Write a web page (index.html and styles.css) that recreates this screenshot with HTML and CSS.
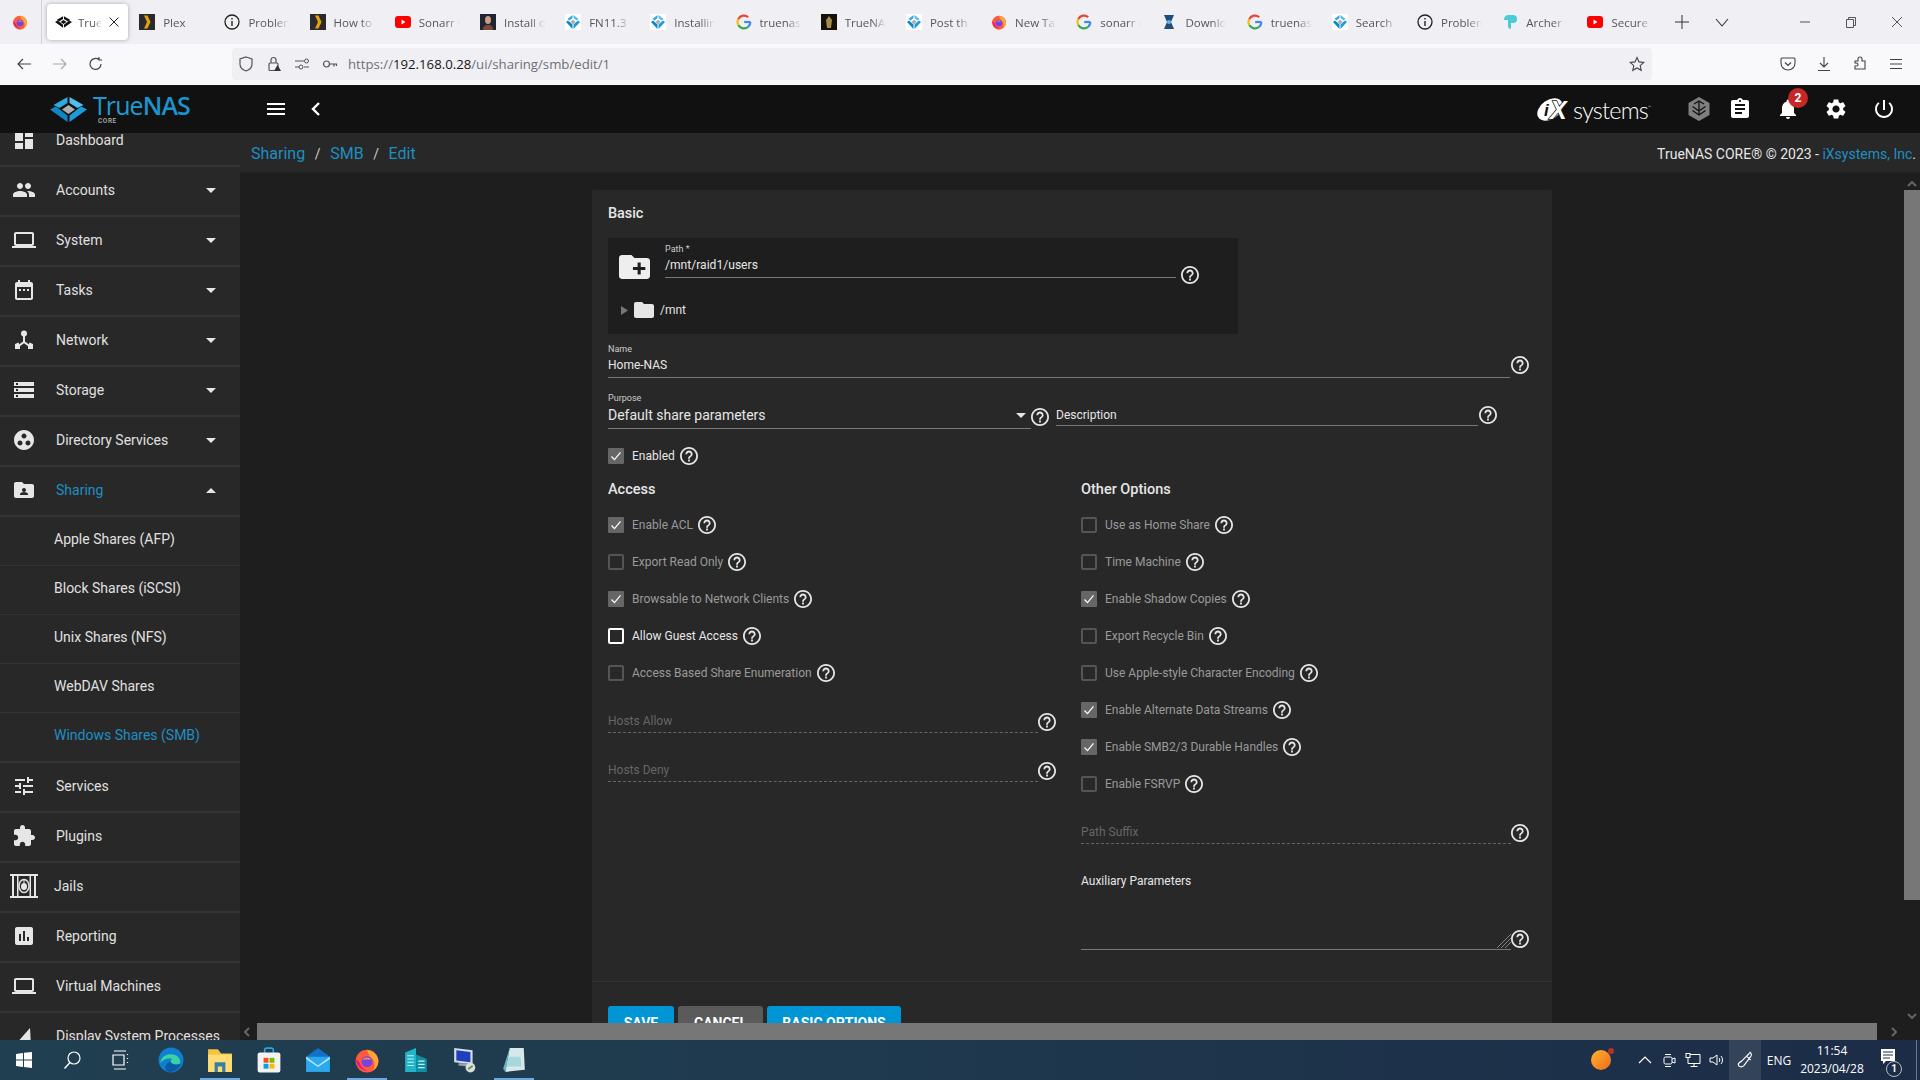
FILE: index.html
```html
<!DOCTYPE html>
<html lang="en">
<head>
<meta charset="utf-8">
<title>TrueNAS - Sharing / SMB / Edit</title>
<link rel="stylesheet" href="styles.css">
</head>
<body>
<svg class="defs" aria-hidden="true">
  <symbol id="help" viewBox="2 2 20 20"><path d="M11 18h2v-2h-2v2zm1-16C6.48 2 2 6.48 2 12s4.48 10 10 10 10-4.48 10-10S17.52 2 12 2zm0 18c-4.41 0-8-3.59-8-8s3.59-8 8-8 8 3.59 8 8-3.59 8-8 8zm0-14c-2.21 0-4 1.79-4 4h2c0-1.1.9-2 2-2s2 .9 2 2c0 2-3 1.75-3 5h2c0-2.25 3-2.5 3-5 0-2.21-1.79-4-4-4z"/></symbol>
  <symbol id="check" viewBox="0 0 16 16"><path d="M3.5 8.5l3 3.2 6-7.4" fill="none" stroke="#fff" stroke-width="1.2"/></symbol>
  <symbol id="tn" viewBox="0 0 37 25"><path fill="#31a9dc" d="M17.500 0v6L9.500 11 3.500 8z"/><path fill="#4cc0ee" d="M19.500 0v6l8 5 6-3z"/><path fill="#0f86c4" d="M0 12.500l6-3 11.500 9V25z"/><path fill="#1a9bdc" d="M37 12.500l-6-3-11.500 9V25z"/><path fill="#aeadae" d="M18.500 8l6.500 4.500-6.500 4.500-6.500-4.500z"/></symbol>
  <symbol id="tnf" viewBox="0 0 16 16"><rect width="16" height="16" fill="#fff"/><path fill="#31a9dc" d="M7.500 1v3L4.500 6.500 2.500 5z"/><path fill="#4cc0ee" d="M8.500 1v3l3 2.500 2-1.500z"/><path fill="#0f86c4" d="M1 8l2-1.500 4.500 4V15z"/><path fill="#1a9bdc" d="M15 8l-2-1.500-4.500 4V15z"/><path fill="#aeadae" d="M8 5.500L10.500 8 8 10.500 5.500 8z"/></symbol>
  <symbol id="yt" viewBox="0 0 16 16"><rect y="2" width="16" height="12" rx="3" fill="#f00"/><path d="M6.5 5.5v5l4-2.5z" fill="#fff"/></symbol>
  <symbol id="plex" viewBox="0 0 16 16"><rect width="16" height="16" fill="#282a2d"/><path d="M5 1.500h3.500l3 6.500-3 6.500H5L8 8z" fill="#e5a00d"/></symbol>
  <symbol id="info" viewBox="0 0 16 16"><circle cx="8" cy="8" r="7" fill="none" stroke="#222" stroke-width="1.3"/><path d="M8 7v5M8 4v1.6" stroke="#222" stroke-width="1.4"/></symbol>
  <symbol id="goog" viewBox="0 0 16 16"><path d="M14.5 8H8.2" stroke="#4285f4" stroke-width="2.2" fill="none"/><path d="M14.4 8a6.4 6.4 0 0 1-2.2 4.8" stroke="#4285f4" stroke-width="2.2" fill="none"/><path d="M12.2 12.8A6.4 6.4 0 0 1 2.3 11" stroke="#34a853" stroke-width="2.2" fill="none"/><path d="M2.3 11a6.4 6.4 0 0 1 0-6" stroke="#fbbc05" stroke-width="2.2" fill="none"/><path d="M2.3 5a6.4 6.4 0 0 1 9.9-1.8" stroke="#ea4335" stroke-width="2.2" fill="none"/></symbol>
  <symbol id="ffx" viewBox="0 0 24 24"><circle cx="12" cy="13" r="10.5" fill="#ff5a3c"/><path d="M12 2.500c6 1 10.500 5.500 10.500 10.500 0 4-2 7-5 8.500 2-3 2-7 0-10-1.500-2-4-3-5.500-9z" fill="#ffa436"/><path d="M2 11c0 5 4 11 11 11-4-1-7-4-8-8z" fill="#e31587"/><circle cx="12" cy="13.500" r="5" fill="#7542e5"/><path d="M8 12c2-3 6-3 8 0-2-1-5-1-8 0z" fill="#ff9640"/></symbol>
  <symbol id="hub" viewBox="0 0 24 24"><circle cx="12" cy="5.500" r="3"/><path d="M11 8h2v5.500l5 3.700-1.200 1.600-4.800-3.600-4.800 3.600L6 17.200l5-3.700z"/><path d="M3 16l3.500-1.500 1.500 3.500v3H3zM21 16l-3.500-1.500-1.500 3.500v3h5z"/></symbol>
  <symbol id="caretd" viewBox="0 0 10 5"><path d="M0 0h10L5 5z"/></symbol>
</svg>

<header class="tabbar">
  <div class="ffbtn"><svg class="ico16"><use href="#ffx"/></svg></div>
  <div class="tab active">
    <svg class="ico17" viewBox="0 0 37 25"><path d="M17.500 0v6L9.500 11 3.500 8zM19.500 0v6l8 5 6-3zM0 12.500l6-3 11.500 9V25zM37 12.500l-6-3-11.500 9V25zM18.500 8l6.500 4.500-6.500 4.500-6.500-4.500z" fill="#111"/></svg>
    <span class="tabtxt short">TrueNAS</span>
    <svg class="tabx" viewBox="0 0 10 10"><path d="M.5.500l9 9M9.500.500l-9 9" stroke="#222" fill="none"/></svg>
  </div>
  <div class="tab"><svg class="ico16"><use href="#plex"/></svg><span class="tabtxt">Plex</span></div>
  <div class="tab"><svg class="ico16"><use href="#info"/></svg><span class="tabtxt">Problem</span></div>
  <div class="tab"><svg class="ico16"><use href="#plex"/></svg><span class="tabtxt">How to</span></div>
  <div class="tab"><svg class="ico16"><use href="#yt"/></svg><span class="tabtxt">Sonarr C</span></div>
  <div class="tab"><svg class="ico16" viewBox="0 0 16 16"><rect width="16" height="16" fill="#1e2433"/><ellipse cx="8" cy="6" rx="3" ry="4" fill="#c99c84"/><path d="M3 16c0-4 2-5 5-5s5 1 5 5z" fill="#7d4a3a"/></svg><span class="tabtxt">Install q</span></div>
  <div class="tab"><svg class="ico16"><use href="#tnf"/></svg><span class="tabtxt">FN11.3 i</span></div>
  <div class="tab"><svg class="ico16"><use href="#tnf"/></svg><span class="tabtxt">Installin</span></div>
  <div class="tab"><svg class="ico16"><use href="#goog"/></svg><span class="tabtxt">truenas</span></div>
  <div class="tab"><svg class="ico16" viewBox="0 0 16 16"><rect width="16" height="16" fill="#15120c"/><path d="M8 2l3 4-1 8H6L5 6z" fill="#a88b4a"/></svg><span class="tabtxt">TrueNAS</span></div>
  <div class="tab"><svg class="ico16"><use href="#tnf"/></svg><span class="tabtxt">Post th</span></div>
  <div class="tab"><svg class="ico16"><use href="#ffx"/></svg><span class="tabtxt">New Tab</span></div>
  <div class="tab"><svg class="ico16"><use href="#goog"/></svg><span class="tabtxt">sonarr c</span></div>
  <div class="tab"><svg class="ico16" viewBox="0 0 16 16"><path d="M3 1h10l-3 7 3 7H3l3-7z" fill="#1f4e79"/><circle cx="8" cy="8" r="2" fill="#6fb1e4"/></svg><span class="tabtxt">Downlo</span></div>
  <div class="tab"><svg class="ico16"><use href="#goog"/></svg><span class="tabtxt">truenas</span></div>
  <div class="tab"><svg class="ico16"><use href="#tnf"/></svg><span class="tabtxt">Search</span></div>
  <div class="tab"><svg class="ico16"><use href="#info"/></svg><span class="tabtxt">Problem</span></div>
  <div class="tab"><svg class="ico16" viewBox="0 0 16 16"><path d="M6 1h5a4 4 0 0 1 0 8H9v6a3 3 0 0 1-3-3V6H2a5 5 0 0 1 4-5z" fill="#4acbd6"/></svg><span class="tabtxt">Archer C</span></div>
  <div class="tab"><svg class="ico16"><use href="#yt"/></svg><span class="tabtxt">Secure F</span></div>
  <div class="tabplus"><svg class="ico16" viewBox="0 0 16 16"><path d="M8 1v14M1 8h14" stroke="#333" fill="none"/></svg></div>
  <div class="tabdown"><svg class="ico16" viewBox="0 0 16 16"><path d="M2 5l6 7 6-7" stroke="#333" fill="none" stroke-width="1.100"/></svg></div>
  <div class="winctl">
    <svg class="ico12" viewBox="0 0 12 12"><path d="M1 6h10" stroke="#555" fill="none"/></svg>
    <svg class="ico12" viewBox="0 0 12 12"><path d="M1.500 3.500h7v8h-7zM3.500 3.500v-2h7v8h-2" stroke="#555" fill="none"/></svg>
    <svg class="ico12" viewBox="0 0 12 12"><path d="M1 1l10 10M11 1L1 11" stroke="#555" fill="none"/></svg>
  </div>
</header>

<nav class="navbar">
  <svg class="navbtn" viewBox="0 0 16 16"><path d="M15 8H2M7 3L2 8l5 5" fill="none" stroke="#444" stroke-width="1.200"/></svg>
  <svg class="navbtn" viewBox="0 0 16 16"><path d="M1 8h13M9 3l5 5-5 5" fill="none" stroke="#aaa" stroke-width="1.200"/></svg>
  <svg class="navbtn" viewBox="0 0 16 16"><path d="M13 8a5.500 5.500 0 1 1-2-4.300M11 1v3h3" fill="none" stroke="#444" stroke-width="1.200"/></svg>
  <div class="urlbar">
    <svg class="urlic" viewBox="0 0 16 16"><path d="M8 1l6 2v5c0 4-3 6-6 7-3-1-6-3-6-7V3z" fill="none" stroke="#555" stroke-width="1.200"/></svg>
    <svg class="urlic" viewBox="0 0 16 16"><rect x="3" y="7" width="9" height="7.500" rx="1" fill="none" stroke="#555" stroke-width="1.200"/><path d="M5 7V4a2.500 2.500 0 0 1 5 0v3" fill="none" stroke="#555" stroke-width="1.200"/><path d="M11.500 9l3.500 6H8z" fill="#333"/></svg>
    <svg class="urlic" viewBox="0 0 16 16"><path d="M1 5h9M1 11h4M10 11h5" stroke="#555" fill="none"/><circle cx="12.500" cy="5" r="2" fill="none" stroke="#555"/><circle cx="7" cy="11" r="2" fill="none" stroke="#555"/></svg>
    <svg class="urlic" viewBox="0 0 16 16"><circle cx="4.500" cy="8" r="3" fill="none" stroke="#555" stroke-width="1.200"/><path d="M7.500 8H15M12 8v2.500M14.500 8v2" stroke="#555" fill="none" stroke-width="1.200"/></svg>
    <span class="url"><span class="urlgray">https://</span>192.168.0.28<span class="urlgray">/ui/sharing/smb/edit/1</span></span>
    <svg class="star" viewBox="0 0 16 16"><path d="M8 1.500l2 4.400 4.800.5-3.600 3.200 1 4.700L8 11.900l-4.200 2.400 1-4.700L1.200 6.400 6 5.900z" fill="none" stroke="#444" stroke-width="1.100"/></svg>
  </div>
  <div class="navright">
    <svg class="navbtn" viewBox="0 0 16 16"><path d="M2 2h12a1 1 0 0 1 1 1v4c0 4-3 7-7 7s-7-3-7-7V3a1 1 0 0 1 1-1z" fill="none" stroke="#444" stroke-width="1.100"/><path d="M5 6.500l3 3 3-3" fill="none" stroke="#444" stroke-width="1.200"/></svg>
    <svg class="navbtn" viewBox="0 0 16 16"><path d="M8 1v10M4 7l4 4 4-4M2 14.500h12" fill="none" stroke="#444" stroke-width="1.100"/></svg>
    <svg class="navbtn" viewBox="0 0 16 16"><path d="M3 5h3V3a2 2 0 0 1 4 0v2h3v8H3v-3h1.500a1.500 1.500 0 0 0 0-3H3z" fill="none" stroke="#444" stroke-width="1.100"/></svg>
    <svg class="navbtn" viewBox="0 0 16 16"><path d="M2 3.500h12M2 8h12M2 12.500h12" fill="none" stroke="#444" stroke-width="1.100"/></svg>
  </div>
</nav>

<header class="topbar">
  <div class="brand">
    <svg class="brandmark"><use href="#tn"/></svg>
    <div class="brandtext"><span class="brandname">True<b>NAS</b></span><span class="brandcore">CORE</span></div>
  </div>
  <svg class="tbicon menu" viewBox="0 0 24 24"><path d="M3 18h18v-2H3v2zm0-5h18v-2H3v2zm0-7v2h18V6H3z" fill="#fff"/></svg>
  <svg class="tbicon back" viewBox="0 0 24 24"><path d="M15 6l-6 6 6 6" fill="none" stroke="#fff" stroke-width="2.400"/></svg>
  <div class="tbright">
    <div class="ixlogo">
      <svg class="ixmark" viewBox="0 0 36 24"><ellipse cx="13" cy="12.500" rx="14" ry="9.500" transform="rotate(-35 13 12.500)" fill="#fff"/><text class="ixi" x="7" y="19">i</text><text class="ixx" x="13" y="22">X</text></svg>
      <span class="ixs">systems</span><span class="ixtm">™</span>
    </div>
    <div class="tbslot small"><svg class="tbicon" viewBox="0 0 22 24"><path fill="#7f7f7f" d="M11 0l10.500 6v12L11 24 .5 18V6z"/><path fill="none" stroke="#111" stroke-width="1.300" d="M4.500 9.500L11 14l6.500-4.500M4.500 13.500L11 18l6.500-4.500M11 5v13M6 7l5-3 5 3"/></svg></div>
    <div class="tbslot"><svg class="tbicon" viewBox="0 0 24 24"><path fill="#fff" d="M19 3h-4.180C14.400 1.840 13.300 1 12 1c-1.300 0-2.400.84-2.820 2H5c-1.100 0-2 .9-2 2v14c0 1.100.9 2 2 2h14c1.100 0 2-.9 2-2V5c0-1.100-.9-2-2-2zm-7 0c.55 0 1 .45 1 1s-.45 1-1 1-1-.45-1-1 .45-1 1-1zm2 14H7v-2h7v2zm3-4H7v-2h10v2zm0-4H7V7h10v2z"/></svg></div>
    <div class="tbslot bell"><svg class="tbicon" viewBox="0 0 24 24"><path fill="#fff" d="M12 22c1.100 0 2-.9 2-2h-4c0 1.100.89 2 2 2zm6-6v-5c0-3.070-1.640-5.640-4.500-6.320V4c0-.83-.67-1.500-1.500-1.500s-1.500.67-1.500 1.500v.68C7.630 5.360 6 7.920 6 11v5l-2 2v1h16v-1l-2-2z"/></svg><span class="badge">2</span></div>
    <div class="tbslot"><svg class="tbicon" viewBox="0 0 24 24"><path fill="#fff" d="M19.140 12.940c.04-.3.06-.61.06-.94 0-.32-.02-.64-.07-.94l2.030-1.580c.18-.14.23-.41.12-.61l-1.920-3.320c-.12-.22-.37-.29-.59-.22l-2.390.96c-.5-.38-1.030-.7-1.620-.94l-.36-2.540c-.04-.24-.24-.41-.48-.41h-3.840c-.24 0-.43.17-.47.41l-.36 2.540c-.59.24-1.130.57-1.620.94l-2.390-.96c-.22-.08-.47 0-.59.22L2.740 8.870c-.12.21-.08.47.12.61l2.030 1.580c-.05.3-.09.63-.09.94s.02.64.07.94l-2.030 1.580c-.18.14-.23.41-.12.61l1.920 3.320c.12.22.37.29.59.22l2.390-.96c.5.38 1.030.7 1.620.94l.36 2.540c.05.24.24.41.48.41h3.840c.24 0 .44-.17.47-.41l.36-2.540c.59-.24 1.130-.56 1.620-.94l2.390.96c.22.08.47 0 .59-.22l1.920-3.320c.12-.22.07-.47-.12-.61l-2.010-1.580zM12 15.600c-1.980 0-3.600-1.620-3.600-3.600s1.620-3.600 3.600-3.600 3.600 1.620 3.600 3.600-1.620 3.600-3.600 3.600z"/></svg></div>
    <div class="tbslot"><svg class="tbicon" viewBox="0 0 24 24"><path fill="#fff" d="M13 3h-2v10h2V3zm4.830 2.170l-1.420 1.420C17.990 7.860 19 9.810 19 12c0 3.870-3.130 7-7 7s-7-3.130-7-7c0-2.190 1.010-4.140 2.580-5.420L6.170 5.170C4.230 6.820 3 9.260 3 12c0 4.970 4.030 9 9 9s9-4.030 9-9c0-2.740-1.230-5.180-3.170-6.830z"/></svg></div>
  </div>
</header>

<div class="main">
  <aside class="sidenav">
    <div class="sidelist">
      <div class="sideitem"><svg class="sideic" viewBox="0 0 24 24"><path d="M3 13h8V3H3v10zm0 8h8v-6H3v6zm10 0h8V11h-8v10zm0-18v6h8V3h-8z"/></svg><span>Dashboard</span></div>
      <div class="sideitem"><svg class="sideic" viewBox="0 0 24 24"><path d="M16 11c1.660 0 2.990-1.340 2.990-3S17.660 5 16 5c-1.660 0-3 1.340-3 3s1.340 3 3 3zm-8 0c1.660 0 2.990-1.340 2.990-3S9.660 5 8 5C6.340 5 5 6.340 5 8s1.340 3 3 3zm0 2c-2.330 0-7 1.170-7 3.500V19h14v-2.500c0-2.330-4.670-3.500-7-3.500zm8 0c-.29 0-.62.02-.97.05 1.160.84 1.970 1.970 1.970 3.450V19h6v-2.500c0-2.330-4.670-3.500-7-3.500z"/></svg><span>Accounts</span><svg class="caret"><use href="#caretd"/></svg></div>
      <div class="sideitem"><svg class="sideic" viewBox="0 0 24 24"><path d="M20 18c1.100 0 1.990-.9 1.990-2L22 6c0-1.100-.9-2-2-2H4c-1.100 0-2 .9-2 2v10c0 1.100.9 2 2 2H0v2h24v-2h-4zM4 6h16v10H4V6z"/></svg><span>System</span><svg class="caret"><use href="#caretd"/></svg></div>
      <div class="sideitem"><svg class="sideic" viewBox="0 0 24 24"><path d="M9 11H7v2h2v-2zm4 0h-2v2h2v-2zm4 0h-2v2h2v-2zm2-7h-1V2h-2v2H8V2H6v2H5c-1.110 0-1.990.9-1.990 2L3 20c0 1.100.89 2 2 2h14c1.100 0 2-.9 2-2V6c0-1.100-.9-2-2-2zm0 16H5V9h14v11z"/></svg><span>Tasks</span><svg class="caret"><use href="#caretd"/></svg></div>
      <div class="sideitem"><svg class="sideic"><use href="#hub"/></svg><span>Network</span><svg class="caret"><use href="#caretd"/></svg></div>
      <div class="sideitem"><svg class="sideic" viewBox="0 0 24 24"><path d="M2 20h20v-4H2v4zm2-3h2v2H4v-2zM2 4v4h20V4H2zm4 3H4V5h2v2zm-4 7h20v-4H2v4zm2-3h2v2H4v-2z"/></svg><span>Storage</span><svg class="caret"><use href="#caretd"/></svg></div>
      <div class="sideitem"><svg class="sideic" viewBox="0 0 24 24"><path d="M12 2C6.480 2 2 6.480 2 12s4.480 10 10 10 10-4.480 10-10S17.520 2 12 2zM8 17.500c-1.380 0-2.500-1.120-2.500-2.500s1.120-2.500 2.500-2.500 2.500 1.120 2.500 2.500-1.120 2.500-2.500 2.500zM9.500 8c0-1.380 1.120-2.500 2.500-2.500s2.500 1.120 2.500 2.500-1.120 2.500-2.500 2.500S9.500 9.380 9.500 8zm6.500 9.500c-1.380 0-2.500-1.120-2.500-2.500s1.120-2.500 2.500-2.500 2.500 1.120 2.500 2.500-1.120 2.500-2.500 2.500z"/></svg><span>Directory Services</span><svg class="caret"><use href="#caretd"/></svg></div>
      <div class="sideitem current"><svg class="sideic" viewBox="0 0 24 24"><path d="M20 6h-8l-2-2H4c-1.100 0-1.990.9-1.990 2L2 18c0 1.100.9 2 2 2h16c1.100 0 2-.9 2-2V8c0-1.100-.9-2-2-2zm-8 4c1.100 0 2 .9 2 2s-.9 2-2 2-2-.9-2-2 .9-2 2-2zm4 7H8v-1c0-1.330 2.670-2 4-2s4 .67 4 2v1z"/></svg><span>Sharing</span><svg class="caret up"><use href="#caretd"/></svg></div>
      <div class="subitem">Apple Shares (AFP)</div>
      <div class="subitem">Block Shares (iSCSI)</div>
      <div class="subitem">Unix Shares (NFS)</div>
      <div class="subitem">WebDAV Shares</div>
      <div class="subitem current last">Windows Shares (SMB)</div>
      <div class="sideitem"><svg class="sideic" viewBox="0 0 24 24"><path d="M3 17v2h6v-2H3zM3 5v2h10V5H3zm10 16v-2h8v-2h-8v-2h-2v6h2zM7 9v2H3v2h4v2h2V9H7zm14 4v-2H11v2h10zm-6-4h2V7h4V5h-4V3h-2v6z"/></svg><span>Services</span></div>
      <div class="sideitem"><svg class="sideic" viewBox="0 0 24 24"><path d="M20.500 11H19V7c0-1.100-.9-2-2-2h-4V3.500C13 2.120 11.880 1 10.500 1S8 2.120 8 3.500V5H4c-1.100 0-1.990.9-1.990 2v3.800H3.500c1.490 0 2.700 1.210 2.700 2.700s-1.210 2.700-2.700 2.700H2V20c0 1.100.9 2 2 2h3.800v-1.500c0-1.490 1.210-2.700 2.700-2.700 1.490 0 2.700 1.210 2.700 2.700V22H17c1.100 0 2-.9 2-2v-4h1.500c1.380 0 2.500-1.120 2.500-2.500S21.880 11 20.500 11z"/></svg><span>Plugins</span></div>
      <div class="sideitem jails"><svg class="sideic big" viewBox="0 0 28 24"><path d="M0 0h28v2H0zM0 22h28v2H0zM2 2h2v20H2zM24 2h2v20h-2zM7 2h1.500v20H7zM19.500 2H21v20h-1.500z"/><ellipse cx="14" cy="12" rx="5" ry="6.500" fill="none" stroke="#e6e6e6" stroke-width="1.500"/><ellipse cx="14" cy="12.500" rx="3" ry="3.500"/><path d="M14 6v3" stroke="#e6e6e6"/></svg><span>Jails</span></div>
      <div class="sideitem"><svg class="sideic" viewBox="0 0 24 24"><path d="M19 3H5c-1.100 0-2 .9-2 2v14c0 1.100.9 2 2 2h14c1.100 0 2-.9 2-2V5c0-1.100-.9-2-2-2zM9 17H7v-7h2v7zm4 0h-2V7h2v10zm4 0h-2v-4h2v4z"/></svg><span>Reporting</span></div>
      <div class="sideitem"><svg class="sideic" viewBox="0 0 24 24"><path d="M20 18c1.100 0 1.990-.9 1.990-2L22 6c0-1.100-.9-2-2-2H4c-1.100 0-2 .9-2 2v10c0 1.100.9 2 2 2H0v2h24v-2h-4zM4 6h16v10H4V6z"/></svg><span>Virtual Machines</span></div>
      <div class="sideitem"><svg class="sideic" viewBox="0 0 24 24"><path d="M3 21L18 4l1 17z"/></svg><span>Display System Processes</span></div>
    </div>
  </aside>

  <div class="pane">
    <div class="crumbs">
      <a class="crumb">Sharing</a><span class="sep">/</span><a class="crumb">SMB</a><span class="sep">/</span><a class="crumb">Edit</a>
      <span class="copy">TrueNAS CORE® © 2023 - <a class="copylink">iXsystems, Inc</a>.</span>
    </div>
    <div class="viewport">
      <section class="content">
        <form class="card">
          <h2 class="h-basic">Basic</h2>
          <div class="explorer">
            <div class="pathrow">
              <svg class="newfolder" viewBox="2 4 20 16" preserveAspectRatio="none"><path d="M20 6h-8l-2-2H4c-1.110 0-1.990.89-1.990 2L2 18c0 1.110.89 2 2 2h16c1.110 0 2-.89 2-2V8c0-1.110-.89-2-2-2zm-1 8h-3v3h-2v-3h-3v-2h3V9h2v3h3v2z"/></svg>
              <div class="field pathfield">
                <label class="tiny">Path *</label>
                <div class="val line p2 v-path">/mnt/raid1/users</div>
              </div>
              <svg class="help h-path"><use href="#help"/></svg>
            </div>
            <div class="tree">
              <svg class="treearrow" viewBox="0 0 7 9"><path d="M0 0l7 4.500L0 9z"/></svg>
              <svg class="treefolder" viewBox="2 4 20 16" preserveAspectRatio="none"><path d="M10 4H4c-1.100 0-1.990.9-1.990 2L2 18c0 1.100.9 2 2 2h16c1.100 0 2-.9 2-2V8c0-1.100-.9-2-2-2h-8l-2-2z"/></svg>
              <span class="treetext">/mnt</span>
            </div>
          </div>

          <div class="namerow">
            <div class="field namefield">
              <label class="tiny">Name</label>
              <div class="val line p2">Home-NAS</div>
            </div>
            <svg class="help h-name"><use href="#help"/></svg>
          </div>

          <div class="purposerow">
            <div class="field purposefield">
              <label class="tiny">Purpose</label>
              <div class="val line p3 selectval"><span>Default share parameters</span><svg class="selcaret"><use href="#caretd"/></svg></div>
            </div>
            <svg class="help h-purpose"><use href="#help"/></svg>
            <div class="descfield"><div class="val line p1 desc">Description</div></div>
            <svg class="help h-desc"><use href="#help"/></svg>
          </div>

          <div class="chk enabled"><span class="box on"><svg><use href="#check"/></svg></span><span class="chklabel normal">Enabled</span><svg class="help"><use href="#help"/></svg></div>

          <div class="cols">
            <div class="col left">
              <h3>Access</h3>
              <div class="chk"><span class="box on"><svg><use href="#check"/></svg></span><span class="chklabel">Enable ACL</span><svg class="help"><use href="#help"/></svg></div>
              <div class="chk"><span class="box"></span><span class="chklabel">Export Read Only</span><svg class="help"><use href="#help"/></svg></div>
              <div class="chk"><span class="box on"><svg><use href="#check"/></svg></span><span class="chklabel">Browsable to Network Clients</span><svg class="help"><use href="#help"/></svg></div>
              <div class="chk"><span class="box focus"></span><span class="chklabel normal">Allow Guest Access</span><svg class="help"><use href="#help"/></svg></div>
              <div class="chk"><span class="box"></span><span class="chklabel">Access Based Share Enumeration</span><svg class="help"><use href="#help"/></svg></div>
              <div class="inputrow hosts-a"><div class="ghost">Hosts Allow</div><svg class="help"><use href="#help"/></svg></div>
              <div class="inputrow hosts-d"><div class="ghost">Hosts Deny</div><svg class="help"><use href="#help"/></svg></div>
            </div>
            <div class="col right">
              <h3>Other Options</h3>
              <div class="chk"><span class="box"></span><span class="chklabel">Use as Home Share</span><svg class="help"><use href="#help"/></svg></div>
              <div class="chk"><span class="box"></span><span class="chklabel">Time Machine</span><svg class="help"><use href="#help"/></svg></div>
              <div class="chk"><span class="box on"><svg><use href="#check"/></svg></span><span class="chklabel">Enable Shadow Copies</span><svg class="help"><use href="#help"/></svg></div>
              <div class="chk"><span class="box"></span><span class="chklabel">Export Recycle Bin</span><svg class="help"><use href="#help"/></svg></div>
              <div class="chk"><span class="box"></span><span class="chklabel">Use Apple-style Character Encoding</span><svg class="help"><use href="#help"/></svg></div>
              <div class="chk"><span class="box on"><svg><use href="#check"/></svg></span><span class="chklabel">Enable Alternate Data Streams</span><svg class="help"><use href="#help"/></svg></div>
              <div class="chk"><span class="box on"><svg><use href="#check"/></svg></span><span class="chklabel">Enable SMB2/3 Durable Handles</span><svg class="help"><use href="#help"/></svg></div>
              <div class="chk"><span class="box"></span><span class="chklabel">Enable FSRVP</span><svg class="help"><use href="#help"/></svg></div>
              <div class="inputrow suffix"><div class="ghost">Path Suffix</div><svg class="help"><use href="#help"/></svg></div>
              <div class="auxlabel">Auxiliary Parameters</div>
              <div class="auxrow">
                <div class="auxarea"><svg class="resize" viewBox="0 0 14 14"><path d="M14 0L0 14M14 4L4 14M14 8L8 14" stroke="#999" stroke-width=".8" fill="none"/></svg></div>
                <svg class="help"><use href="#help"/></svg>
              </div>
            </div>
          </div>

          <div class="actions">
            <button type="button" class="btn primary">SAVE</button>
            <button type="button" class="btn cancel">CANCEL</button>
            <button type="button" class="btn primary wide">BASIC OPTIONS</button>
          </div>
        </form>
      </section>
      <div class="vscroll">
        <svg class="sarrow" viewBox="0 0 10 6"><path d="M1 5l4-4 4 4" fill="none" stroke="#666" stroke-width="2"/></svg>
        <div class="vthumb"></div>
        <svg class="sarrow end" viewBox="0 0 10 6"><path d="M1 1l4 4 4-4" fill="none" stroke="#666" stroke-width="2"/></svg>
      </div>
      <div class="hscroll">
        <svg class="harrow" viewBox="0 0 6 10"><path d="M5 1L1 5l4 4" fill="none" stroke="#666" stroke-width="2"/></svg>
        <div class="hthumb"></div>
        <svg class="harrow" viewBox="0 0 6 10"><path d="M1 1l4 4-4 4" fill="none" stroke="#666" stroke-width="2"/></svg>
      </div>
      <div class="corner"></div>
    </div>
  </div>
</div>

<footer class="taskbar">
  <div class="tb-btn"><svg class="tb-ic" viewBox="0 0 20 20"><path fill="#fff" d="M2 4l7-1v6.500H2zM10 2.800L18 2v7.500h-8zM2 10.500h7V17l-7-1zM10 10.500h8V18l-8-1z"/></svg></div>
  <div class="tb-btn"><svg class="tb-ic" viewBox="0 0 20 20"><circle cx="12" cy="8" r="6" fill="none" stroke="#fff" stroke-width="1.200"/><path d="M8 12.500L2.500 18.500" stroke="#fff" stroke-width="1.400"/></svg></div>
  <div class="tb-btn gapr"><svg class="tb-ic" viewBox="0 0 20 20"><path d="M4 1h12M4 19h12M3 5h11v10H3zM17.500 4v1M17.500 8v1M17.500 12v1" fill="none" stroke="#fff" stroke-width="1.200"/></svg></div>
  <div class="tb-app"><svg class="tb-ic big" viewBox="0 0 24 24"><circle cx="12" cy="12" r="11.500" fill="#0f7fd0"/><path d="M2 15C3 8 9 6 14 7c5 1 7 5 6.500 8-3 2-9 1-9-2 0-1 1-1.500 2-1.500-2-2-9-1-11.500 3.500z" fill="#38d2a3"/><path d="M11.500 13c0 3 5 4.500 10 2.500C19 21 14 23.500 10 23 6 22 5 17 11.500 13z" fill="#0c59a4"/></svg></div>
  <div class="tb-app act"><svg class="tb-ic big" viewBox="0 0 24 24"><path fill="#f5c343" d="M1 2h9l3 4h10v17H1z"/><path fill="#ffdd73" d="M1 7h22v16H1z"/><path fill="#3a7ea8" d="M7 23v-9h10v9h-3v-5h-4v5z"/></svg></div>
  <div class="tb-app"><svg class="tb-ic big" viewBox="0 0 24 24"><path d="M8 6V3a2 2 0 0 1 2-2h4a2 2 0 0 1 2 2v3" fill="none" stroke="#2aa6e8" stroke-width="1.500"/><rect x="1.500" y="5" width="21" height="18.500" rx="2" fill="#f2f2f2"/><rect x="7" y="10" width="4.500" height="4.500" fill="#f25022"/><rect x="12.500" y="10" width="4.500" height="4.500" fill="#7fba00"/><rect x="7" y="15.500" width="4.500" height="4.500" fill="#00a4ef"/><rect x="12.500" y="15.500" width="4.500" height="4.500" fill="#ffb900"/></svg></div>
  <div class="tb-app"><svg class="tb-ic big" viewBox="0 0 24 24"><path fill="#1170c8" d="M12 1l11 8v1H1V9z"/><path fill="#2ba9ef" d="M1 9h22v14H1z"/><path fill="#bfe6fb" d="M1 9l11 8 11-8v2l-11 7.500L1 11z"/></svg></div>
  <div class="tb-app act"><svg class="tb-ic big"><use href="#ffx"/></svg></div>
  <div class="tb-app"><svg class="tb-ic big" viewBox="0 0 24 24"><path fill="#22b5c9" d="M2 5l10-4v22H2z"/><path fill="#0f8fa3" d="M12 7l10 4v12H12z"/><path stroke="#c7f3f7" d="M4 8h6M4 11h6M4 14h6M4 17h6M14 13h6M14 16h6M14 19h6" fill="none"/></svg></div>
  <div class="tb-app"><svg class="tb-ic big" viewBox="0 0 24 24"><path fill="#d8dde8" d="M2 1l17 2v13L2 14z"/><path fill="#1f3fbf" d="M4 3l13 1.500v9.500L4 12.500z"/><path fill="#9aa3b3" d="M6 15h9v3l-9-1z"/><circle cx="17" cy="19" r="4.500" fill="#dcdcdc"/><path d="M15 20.500l4-3" stroke="#3a9b3a" stroke-width="1.500"/></svg></div>
  <div class="tb-app act"><svg class="tb-ic big" viewBox="0 0 24 24"><path fill="#d6e8ea" d="M8 1h13l1 20-18 2z"/><path fill="#68b6c4" d="M8 1L2 20l2 3z"/><path fill="#a8d6dd" d="M7 9h11l1 9H5z"/></svg></div>
  <div class="tray">
    <div class="orange"><span class="orangedot"></span></div>
    <svg class="trayic" viewBox="0 0 16 16"><path d="M2 11l6-6 6 6" fill="none" stroke="#fff" stroke-width="1.200"/></svg>
    <svg class="trayic" viewBox="0 0 16 16"><rect x="3" y="5" width="8" height="7" rx="1.500" fill="none" stroke="#fff"/><path d="M11 7l3-1v5l-3-1M4 2.500h6M4 14.500h6" fill="none" stroke="#fff"/></svg>
    <svg class="trayic" viewBox="0 0 16 16"><path d="M3 2.500h12v9H3zM9 11.500v3M5.500 14.500h7" fill="none" stroke="#fff"/><rect x="1" y="1.500" width="4" height="4" fill="#1c2d49" stroke="#fff"/></svg>
    <svg class="trayic" viewBox="0 0 16 16"><path d="M1 6h3l4-3v10l-4-3H1zM10 6c1 1 1 3 0 4M12 4c2 2 2 6 0 8" fill="none" stroke="#fff"/></svg>
    <div class="pen"><svg class="penic" viewBox="0 0 16 16"><path d="M12 1c2 1 2 3 1 4l-6 8c-2 2-5 1-5-1 0-1 1-2 3-3l7-7M10 5l3 3" fill="none" stroke="#fff"/></svg></div>
    <span class="eng">ENG</span>
    <div class="clock"><span>11:54</span><span>2023/04/28</span></div>
    <div class="notif"><svg class="notific" viewBox="0 0 20 20"><path fill="#fff" d="M2 1h14v12H7l-3 3v-3H2z"/><path stroke="#1c2d49" d="M4 4h10M4 7h10M4 10h7" fill="none"/></svg><span class="notifnum">1</span></div>
    <div class="showdesk"></div>
  </div>
</footer>
</body>
</html>
```

FILE: styles.css
```css
* { box-sizing: border-box; }
html, body { margin: 0; padding: 0; }
body {
  width: 1920px; height: 1080px; overflow: hidden;
  display: flex; flex-direction: column;
  font-family: Roboto, "Liberation Sans", sans-serif;
  background: #1e1e1e; color: #e6e6e6;
}
.defs { width: 0; height: 0; position: absolute; }

/* browser tab strip */
.tabbar {
  height: 44px; flex: none; display: flex; align-items: center;
  background: #f0f0f4; font-family: "Open Sans", "Liberation Sans", sans-serif;
  font-size: 11.5px; color: #55555a;
}
.ffbtn { width: 42px; height: 44px; flex: none; display: flex; align-items: center; padding-left: 12px; border-right: 1px solid #d4d4d8; margin-right: 5px; }
.ico16 { width: 16px; height: 16px; flex: none; }
.ico17 { width: 17px; height: 14px; flex: none; }
.ico12 { width: 12px; height: 12px; flex: none; }
.tab { width: 81px; margin-right: 4.2px; flex: none; height: 36px; padding-left: 7px; display: flex; align-items: center; gap: 8px; }
.tab.active { background: #fff; border-radius: 4px; box-shadow: 0 0 4px rgba(0,0,0,.3); gap: 6px; padding-left: 8px; }
.tabtxt {
  width: 41px; white-space: nowrap; overflow: hidden;
  -webkit-mask-image: linear-gradient(90deg, #000 65%, transparent);
  mask-image: linear-gradient(90deg, #000 65%, transparent);
}
.tabtxt.short { width: 24px; }
.tabx { width: 10px; height: 10px; margin-left: 1px; flex: none; }
.tabplus { width: 16px; margin-left: 8px; flex: none; display: flex; }
.tabdown { width: 16px; margin-left: 24px; flex: none; display: flex; }
.winctl { margin-left: auto; width: 121px; display: flex; gap: 34px; flex: none; }

/* browser nav bar */
.navbar {
  height: 41px; flex: none; display: flex; align-items: center;
  background: #f9f9fb; border-bottom: 1px solid #fff; padding: 0 0 1px 16px; gap: 20px;
}
.navbtn { width: 16px; height: 16px; flex: none; }
.urlbar {
  margin-left: 108px; width: 1420px; height: 32px;
  display: flex; align-items: center; background: #f0f0f4; border-radius: 4px;
  padding: 0 7px 0 6px; gap: 12px; flex: none;
}
.urlic { width: 16px; height: 16px; flex: none; }
.url { font: 13.2px "Open Sans", "Liberation Sans", sans-serif; color: #15141a; margin-left: -2px; white-space: nowrap; }
.urlgray { color: #6f6f75; }
.star { width: 16px; height: 16px; margin-left: auto; flex: none; }
.navright { display: flex; gap: 20px; margin-left: 108px; }

/* TrueNAS top bar */
.topbar { height: 48px; flex: none; background: #111; display: flex; align-items: center; }
.brand { width: 240px; flex: none; display: flex; padding-left: 50px; gap: 6px; align-items: center; }
.brandmark { width: 37px; height: 25px; flex: none; }
.brandtext { display: flex; flex-direction: column; width: 100px; }
.brandname { font: 400 25px/26px "Open Sans", sans-serif; color: #1f9bd1; letter-spacing: -.9px; margin-top: -1px; white-space: nowrap; }
.brandname b { font-weight: 600; color: #1b93cc; }
.brandcore { font: 500 6.5px/7px Roboto, sans-serif; color: #aeb4b8; letter-spacing: .6px; margin-left: 5px; }
.tbicon { width: 24px; height: 24px; flex: none; }
.menu { margin-left: 24px; }
.back { margin-left: 16px; }
.tbright { margin-left: auto; display: flex; align-items: center; padding-right: 12px; }
.ixlogo { display: flex; align-items: center; height: 40px; width: 115px; margin-right: 30px; color: #fff; }
.ixmark { width: 36px; height: 24px; flex: none; overflow: visible; }
.ixi { font: italic 700 17px "Liberation Sans", sans-serif; fill: #111; }
.ixx { font: italic 700 25px "Liberation Sans", sans-serif; fill: #fff; stroke: #111; stroke-width: 1.5px; paint-order: stroke; }
.ixs { font: 300 23.5px/30px Lato, Roboto, sans-serif; letter-spacing: -.8px; margin-top: 2px; }
.ixtm { font-size: 5px; align-self: flex-start; margin-top: 15px; color: #ccc; }
.tbslot { width: 48px; height: 48px; display: flex; align-items: center; justify-content: center; flex: none; position: relative; }
.tbslot.small { width: 34px; }
.badge {
  position: absolute; top: 3px; right: 4px; width: 20px; height: 20px; border-radius: 50%;
  background: #c62828; color: #fff; font: 700 12px/20px Roboto, sans-serif; text-align: center;
}

/* main */
.main { height: 907px; flex: none; display: flex; }
.sidenav { width: 240px; flex: none; background: #282828; overflow: hidden; }
.sidelist { margin-top: -16px; }
.sideitem {
  height: 50px; display: flex; align-items: center; padding: 0 24px 2px 12px;
  border-bottom: 2px solid #333; font-size: 14px; color: #e0e0e0;
}
.sideitem span { margin-left: 20px; white-space: nowrap; }
.sideic { width: 24px; height: 24px; fill: #e6e6e6; flex: none; }
.sideic.big { width: 28px; margin-left: -2px; margin-right: -2px; }
.jails span { margin-left: 18px; }
.caret { width: 10px; height: 5px; fill: #e6e6e6; margin-left: auto; flex: none; }
.caret.up { transform: rotate(180deg); }
.sideitem.current span, .subitem.current { color: #1f8ec2; }
.subitem { height: 49px; padding: 0 0 5px 54px; display: flex; align-items: center; font-size: 14px; color: #e0e0e0; border-bottom: 1px solid #333; }
.subitem.last { height: 50px; border-bottom: 2px solid #333; padding-bottom: 4px; }

.pane { flex: 1; min-width: 0; display: flex; flex-direction: column; }
.crumbs {
  height: 40px; flex: none; background: #282828; display: flex; align-items: center;
  padding: 2px 4px 0 11px; font-size: 16px; border-bottom: 1px solid #222;
}
.crumb { color: #1f8ec2; }
.sep { color: #ccc; width: 25px; text-align: center; font-size: 14px; }
.copy { margin-left: auto; font-size: 14px; color: #e6e6e6; }
.copylink { color: #1f8ec2; }

.viewport {
  flex: 1; min-height: 0; display: grid;
  grid-template-columns: 1fr 16px; grid-template-rows: 1fr 17px;
}
.content { overflow: hidden; padding: 17px 0 0 352px; background: #1e1e1e; }
.card { width: 960px; background: #282828; padding: 12px 0 0 16px; margin: 0; border-radius: 2px; }
.h-basic { margin: 0 0 12px; font: 500 14.5px/24px Roboto, sans-serif; color: #e6e6e6; height: 24px; letter-spacing: -.1px; }

.explorer { width: 630px; height: 96px; background: #1e1e1e; padding: 6px 0 0 11px; }
.pathrow { display: flex; align-items: flex-start; }
.newfolder { width: 31px; height: 24px; fill: #eee; margin-top: 11px; flex: none; }
.field { display: flex; flex-direction: column; flex: none; }
.pathfield { width: 511px; margin-left: 15px; }
.tiny { font-size: 9px; line-height: 10px; height: 10px; color: #ccc; }
.val { font-size: 12px; line-height: 20px; color: #e6e6e6; }
.v-path { font-size: 12.1px; margin-top: 4px; padding-bottom: 0; }
.line { border-bottom: 1px solid #777; }
.p1 { padding-bottom: 1px; }
.p2 { padding-bottom: 2px; margin-top: 1px; }
.p3 { padding-bottom: 3px; margin-top: 2px; }
.help { width: 18px; height: 18px; fill: #e6e6e6; flex: none; }
.h-path { margin: 22px 0 0 5px; }
.tree { display: flex; align-items: center; height: 20px; margin-top: 16px; padding-left: 2px; }
.treearrow { width: 7px; height: 9px; fill: #777; flex: none; }
.treefolder { width: 20px; height: 16px; fill: #e6e6e6; margin-left: 6px; flex: none; }
.treetext { font-size: 12px; margin-left: 6px; color: #e0e0e0; }

.namerow { display: flex; margin-top: 10px; align-items: flex-start; }
.namefield { width: 902px; }
.h-name { margin: 12px 0 0 1px; }
.purposerow { display: flex; margin-top: 15px; align-items: flex-start; }
.purposefield { width: 423px; }
.selectval { font-size: 14px; display: flex; align-items: center; justify-content: space-between; padding-right: 5px; }
.selcaret { width: 10px; height: 5px; fill: #e6e6e6; }
.h-purpose { margin: 15px 0 0 0; }
.descfield { width: 422px; margin: 12px 0 0 7px; flex: none; }
.desc { height: 21px; }
.h-desc { margin: 13px 0 0 1px; }

.chk { height: 37px; display: flex; align-items: center; }
.box { width: 16px; height: 16px; border: 2px solid #555; border-radius: 2px; flex: none; display: block; }
.box.on { background: #666; border: 0; border-radius: 1px; }
.box.on svg { width: 16px; height: 16px; display: block; }
.box.focus { border-color: #fff; }
.chklabel { font-size: 12px; margin: 0 5px 0 8px; color: #9a9a9a; white-space: nowrap; }
.chklabel.normal { color: #e6e6e6; }
.enabled { height: 16px; margin-top: 19px; }

.cols { display: grid; grid-template-columns: 473px 1fr; margin-top: 16px; }
.col h3 { margin: 0 0 6px; font: 500 14.5px/20px Roboto, sans-serif; height: 20px; color: #e6e6e6; }
.inputrow { display: flex; align-items: center; }
.ghost { width: 430px; height: 22px; line-height: 20px; font-size: 12px; color: #666; border-bottom: 1px dashed #666; flex: none; }
.hosts-a { margin-top: 20px; }
.hosts-d { margin-top: 27px; }
.suffix { margin-top: 20px; }
.auxlabel { font-size: 12px; line-height: 20px; margin-top: 27px; color: #e6e6e6; }
.auxrow { display: flex; align-items: flex-end; }
.auxarea { width: 430px; height: 59px; border-bottom: 1px solid #777; flex: none; display: flex; justify-content: flex-end; align-items: flex-end; padding-bottom: 1px; }
.resize { width: 14px; height: 14px; }
.auxrow .help { margin-bottom: 2px; }

.actions { margin: 31px 0 0 -16px; border-top: 1px solid #333; padding: 24px 0 0 16px; display: flex; gap: 4px; }
.btn { height: 36px; border: 0; border-radius: 3px; font: 700 14px/30px Roboto, sans-serif; color: #fff; padding: 0 0 2px; width: 66px; text-align: center; }
.btn.primary { background: #0095d5; }
.btn.cancel { background: #5a5a5a; width: 85px; color: #fff; }
.btn.wide { width: 134px; }

.vscroll { grid-row: 1; grid-column: 2; background: #1e1e1e; display: flex; flex-direction: column; align-items: center; padding: 8px 0 4px; }
.sarrow { width: 10px; height: 6px; flex: none; }
.vthumb { width: 16px; height: 710px; background: #777; margin-top: 3px; }
.sarrow.end { margin-top: auto; }
.hscroll { grid-row: 2; grid-column: 1; background: #1e1e1e; display: flex; align-items: center; padding: 0 0 0 4px; }
.harrow { width: 6px; height: 10px; flex: none; }
.hthumb { width: 1620px; height: 17px; background: #777; margin: 0 14px 0 7px; flex: none; }
.corner { grid-row: 2; grid-column: 2; background: #1e1e1e; }

/* taskbar */
.taskbar {
  height: 40px; flex: none; display: flex; align-items: center;
  background: linear-gradient(90deg, #203f50 0%, #1f3a4e 40%, #1c2c47 100%);
  color: #fff; font: 12px "Open Sans", "Liberation Sans", sans-serif;
}
.tb-btn { width: 48px; height: 40px; flex: none; display: flex; align-items: center; justify-content: center; }
.tb-btn.gapr { margin-right: 2px; }
.tb-ic { width: 20px; height: 20px; }
.tb-ic.big { width: 26px; height: 26px; }
.tb-app { width: 49px; height: 40px; flex: none; display: flex; align-items: center; justify-content: center; }
.tb-app.act { background: linear-gradient(#6fa8dc, #6fa8dc) center bottom / 40px 2px no-repeat; }
.tray { margin-left: auto; width: 337px; display: flex; align-items: center; height: 40px; flex: none; }
.orange { width: 36px; flex: none; display: flex; justify-content: center; position: relative; height: 22px; margin-right: 14px; }
.orange::before { content: ""; width: 20px; height: 20px; margin-top: 1px; border-radius: 50%; background: linear-gradient(135deg, #ffb52e, #ef6a1a); }
.orangedot { position: absolute; top: -1px; right: 5px; width: 6px; height: 6px; border-radius: 50%; background: #b8302a; }
.trayic { width: 16px; height: 16px; margin: 0 4px; flex: none; }
.pen { width: 32px; height: 40px; flex: none; background: rgba(255,255,255,.1); display: flex; align-items: center; justify-content: center; }
.penic { width: 18px; height: 18px; flex: none; }
.eng { width: 36px; flex: none; text-align: center; }
.clock { width: 70px; flex: none; display: flex; flex-direction: column; align-items: center; line-height: 18px; }
.notif { width: 44px; margin-right: 5px; height: 40px; flex: none; position: relative; display: flex; align-items: center; justify-content: center; }
.notific { width: 20px; height: 20px; margin-top: -4px; }
.notifnum { position: absolute; right: 9px; bottom: 3px; width: 16px; height: 16px; border: 1px solid #bbb; border-radius: 50%; background: #1c2d49; font: 700 10px/14px Roboto, sans-serif; text-align: center; }
.showdesk { width: 1px; height: 40px; background: #6a7a90; flex: none; }
```
